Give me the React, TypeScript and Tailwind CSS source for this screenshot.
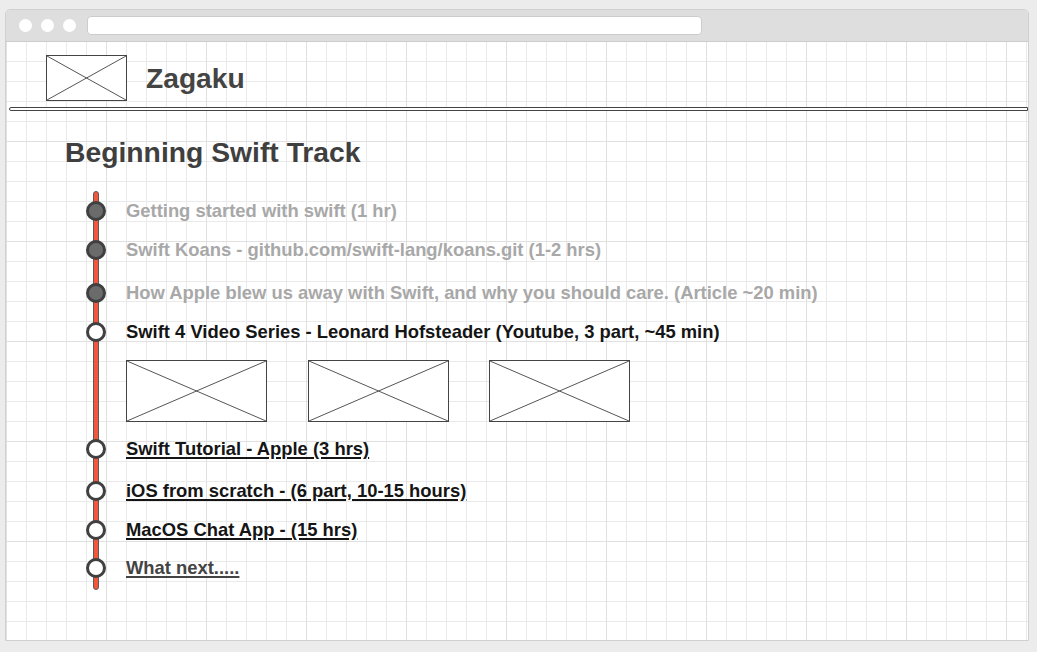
const DONE = [
  'Getting started with swift (1 hr)',
  'Swift Koans - github.com/swift-lang/koans.git (1-2 hrs)',
  'How Apple blew us away with Swift, and why you should care. (Article ~20 min)',
];

function Placeholder({ className }: { className: string }) {
  return (
    <div className={`relative border border-[#444] bg-white ${className}`}>
      <svg className="absolute inset-0 w-full h-full" viewBox="0 0 100 100" preserveAspectRatio="none">
        <line x1="0" y1="0" x2="100" y2="100" stroke="#555" strokeWidth="1" vectorEffect="non-scaling-stroke" />
        <line x1="100" y1="0" x2="0" y2="100" stroke="#555" strokeWidth="1" vectorEffect="non-scaling-stroke" />
      </svg>
    </div>
  );
}

function Dot({ done }: { done?: boolean }) {
  return (
    <div
      className={`relative z-10 w-5 h-5 shrink-0 rounded-full border-[3px] border-[#404040] ${
        done ? 'bg-[#6b6b6b]' : 'bg-white'
      }`}
    />
  );
}

function Row({ children, done, className = '' }: { children: React.ReactNode; done?: boolean; className?: string }) {
  return (
    <div className={`flex items-center gap-5 h-5 ${className}`}>
      <Dot done={done} />
      {children}
    </div>
  );
}

export default function App() {
  return (
    <div className="w-full h-[652px] bg-[#ececec] pt-[9px] font-['Liberation_Sans',Arial,sans-serif]">
      <div className="ml-[5px] w-[1024px] h-[632px] border border-[#d0d0d0] rounded-t-[5px] bg-white flex flex-col overflow-hidden">
        {/* title bar */}
        <div className="h-[32px] shrink-0 bg-[#dedede] border-b border-[#cccccc] flex items-center pl-[13px]">
          <div className="flex gap-[9px]">
            <span className="w-[13px] h-[13px] rounded-full bg-white" />
            <span className="w-[13px] h-[13px] rounded-full bg-white" />
            <span className="w-[13px] h-[13px] rounded-full bg-white" />
          </div>
          <div className="ml-[11px] w-[615px] h-[19px] bg-white border border-[#cccccc] rounded-[4px]" />
        </div>

        {/* page */}
        <div className="flex-1 bg-[linear-gradient(to_right,#e0e0e0_1px,transparent_1px),linear-gradient(to_bottom,#e0e0e0_1px,transparent_1px),linear-gradient(to_right,#eaeaea_1px,transparent_1px),linear-gradient(to_bottom,#eaeaea_1px,transparent_1px)] bg-[size:100px_100px,100px_100px,20px_20px,20px_20px] bg-[position:0_-1px]">
          <div className="flex items-center gap-[19px] pl-[40px] pt-[13px] pb-[6px]">
            <Placeholder className="w-[81px] h-[46px]" />
            <span className="text-[28.2px] leading-8 font-bold text-[#444]">Zagaku</span>
          </div>
          <div className="ml-[3px] h-[4px] border border-[#444] rounded-l-[2px] bg-white" />

          <h1 className="ml-[59px] mt-[25px] text-[28.3px] leading-8 font-bold text-[#3f3f3f]">Beginning Swift Track</h1>

          <div className="relative ml-[80px] mt-[23px] pt-[10px] pb-[12px] text-[18.4px] leading-5 font-bold">
            <div className="absolute left-[7px] top-0 bottom-0 w-[6px] rounded-full bg-[#f2573b] border border-[#5a5a5a]" />

            <Row done>
              <span className="text-[#a8a8a8]">{DONE[0]}</span>
            </Row>
            <Row done className="mt-[19px]">
              <span className="text-[#a8a8a8]">{DONE[1]}</span>
            </Row>
            <Row done className="mt-[23px]">
              <span className="text-[#a8a8a8]">{DONE[2]}</span>
            </Row>
            <Row className="mt-[19px]">
              <span className="text-[#151515]">Swift 4 Video Series - Leonard Hofsteader (Youtube, 3 part, ~45 min)</span>
            </Row>
            <div className="ml-10 mt-[18px] flex">
              <Placeholder className="w-[141px] h-[62px]" />
              <Placeholder className="ml-[41px] w-[141px] h-[62px]" />
              <Placeholder className="ml-[40px] w-[141px] h-[62px]" />
            </div>
            <Row className="mt-[17px]">
              <a className="text-[#151515] underline decoration-2 underline-offset-2">Swift Tutorial - Apple (3 hrs)</a>
            </Row>
            <Row className="mt-[22px]">
              <a className="text-[#151515] underline decoration-2 underline-offset-2">iOS from scratch - (6 part, 10-15 hours)</a>
            </Row>
            <Row className="mt-[19px]">
              <a className="text-[#151515] underline decoration-2 underline-offset-2">MacOS Chat App - (15 hrs)</a>
            </Row>
            <Row className="mt-[18px]">
              <a className="text-[#444] underline decoration-2 underline-offset-2">What next.....</a>
            </Row>
          </div>
        </div>
      </div>
    </div>
  );
}
